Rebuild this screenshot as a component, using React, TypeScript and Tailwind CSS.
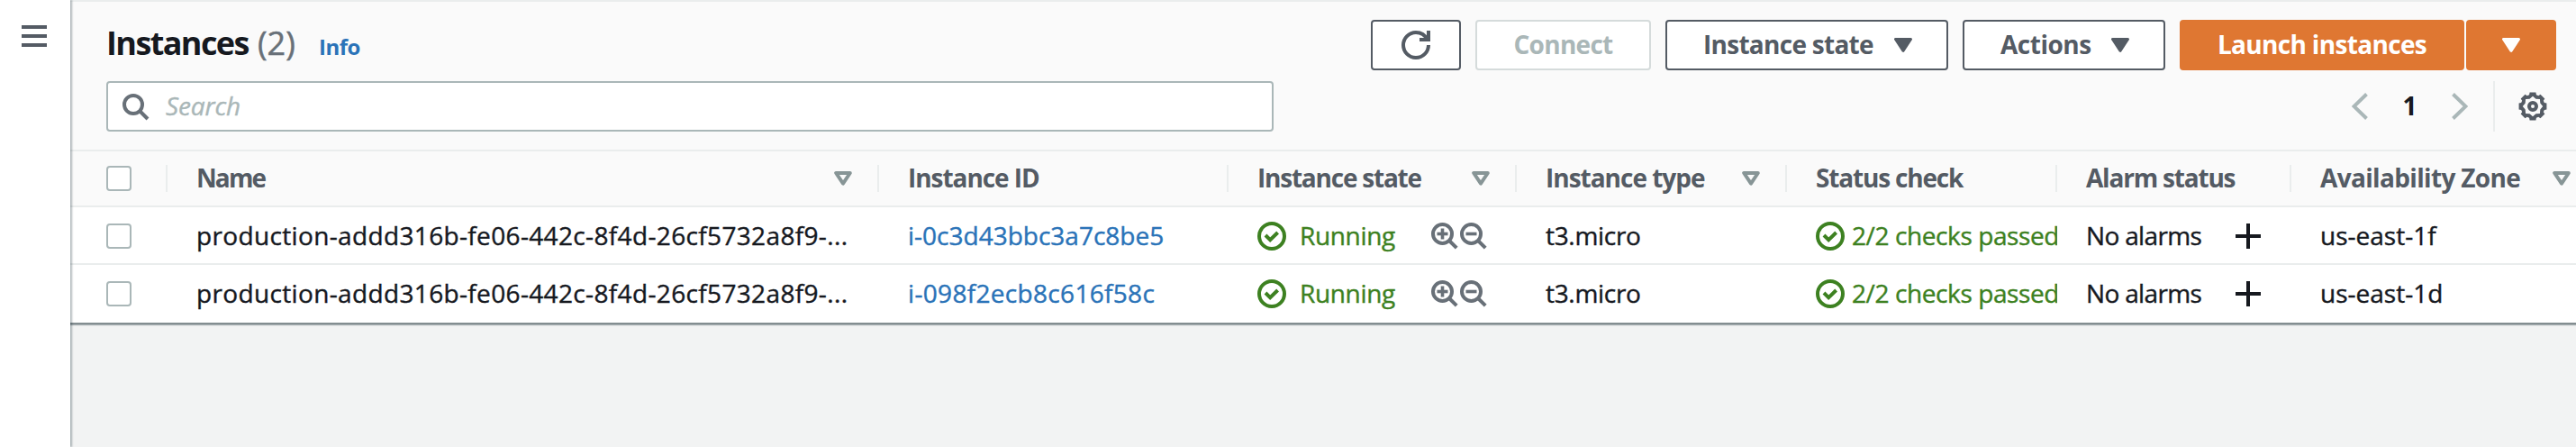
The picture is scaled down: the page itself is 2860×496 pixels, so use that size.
import type { ReactNode } from "react";

const polar = (r: number, deg: number) => {
  const a = (deg * Math.PI) / 180;
  return `${(8 + r * Math.cos(a)).toFixed(2)} ${(8 + r * Math.sin(a)).toFixed(2)}`;
};

const teeth = Array.from({ length: 8 }, (_, i) => i * 45);
const gearOutline = teeth
  .map((t) => [polar(6.7, t - 17), polar(7.9, t - 12.5), polar(7.9, t + 12.5), polar(6.7, t + 17)].join("L"))
  .join("L");
const gearHole = teeth.map((t) => [polar(5.6, t), polar(4.5, t + 22.5)].join("L")).join("L");

function GearIcon() {
  return (
    <svg viewBox="0 0 16 16" className="size-8 text-[#545b64]" fill="currentColor" fillRule="evenodd">
      <path d={`M${gearOutline}ZM${gearHole}Z`} />
      <circle cx="8" cy="8" r="2" fill="none" stroke="currentColor" strokeWidth="2" />
    </svg>
  );
}

function RefreshIcon() {
  return (
    <svg viewBox="0 0 16 16" className="size-8" fill="none" stroke="currentColor" strokeWidth="2">
      <path d="M15 8c0 3.87-3.13 7-7 7s-7-3.13-7-7 3.13-7 7-7c2.79 0 5.2 1.63 6.33 4" />
      <path d="M10 5h5V0" />
    </svg>
  );
}

function CheckCircle() {
  return (
    <svg viewBox="0 0 16 16" className="size-8 shrink-0" fill="none" stroke="currentColor" strokeWidth="2">
      <circle cx="8" cy="8" r="7" />
      <path d="M4.5 7.5 7.1 10.1 11.3 6" />
    </svg>
  );
}

function ZoomIcon({ plus = false }: { plus?: boolean }) {
  return (
    <svg viewBox="0 0 16 16" className="size-8 shrink-0 text-[#687078]" fill="none" stroke="currentColor" strokeWidth="2">
      <circle cx="6.75" cy="6.75" r="5.25" />
      <path d="M10.5 10.5 14.6 14.6" />
      <path d="M3.75 6.75h6" strokeWidth="1.8" />
      {plus && <path d="M6.75 3.75v6" strokeWidth="1.8" />}
    </svg>
  );
}

function SearchIcon() {
  return (
    <svg viewBox="0 0 16 16" className="size-8 shrink-0 text-[#687078]" fill="none" stroke="currentColor" strokeWidth="2">
      <circle cx="7" cy="7" r="5" />
      <path d="m10.5 10.5 4.5 4.5" />
    </svg>
  );
}

function Caret() {
  return (
    <svg viewBox="0 0 20 16" className="h-4 w-5 shrink-0" fill="currentColor" stroke="currentColor" strokeWidth="3" strokeLinejoin="round">
      <path d="M1.5 1.5h17L10 14.3z" />
    </svg>
  );
}

function SortIcon() {
  return (
    <svg viewBox="0 0 20 16" className="h-4 w-5 shrink-0 text-[#879596]" fill="none" stroke="currentColor" strokeWidth="4" strokeLinejoin="round">
      <path d="M2.2 2h15.6L10 13.6z" />
    </svg>
  );
}

function Chevron({ right = false }: { right?: boolean }) {
  return (
    <svg viewBox="0 0 18 30" className="h-[30px] w-[18px] text-[#aab7b8]" fill="none" stroke="currentColor" strokeWidth="4">
      <path d={right ? "M1.5 1.5 15.5 15 1.5 28.5" : "M16.5 1.5 2.5 15 16.5 28.5"} />
    </svg>
  );
}

function PlusIcon() {
  return (
    <svg viewBox="0 0 28 28" className="size-7 shrink-0" fill="none" stroke="currentColor" strokeWidth="4">
      <path d="M14 0v28M0 14h28" />
    </svg>
  );
}

function Checkbox() {
  return <span className="size-7 rounded border-2 border-[#aab7b8] bg-white" />;
}

const columns = [
  { label: "Name", track: "tracking-[-1.9px]", sortable: true },
  { label: "Instance ID", track: "tracking-[-1.05px]", sortable: false },
  { label: "Instance state", track: "tracking-[-1.22px]", sortable: true },
  { label: "Instance type", track: "tracking-[-1.01px]", sortable: true },
  { label: "Status check", track: "tracking-[-1.18px]", sortable: false },
  { label: "Alarm status", track: "tracking-[-1.2px]", sortable: false },
  { label: "Availability Zone", track: "tracking-[-0.66px]", sortable: true },
];

const instances = [
  { id: "i-0c3d43bbc3a7c8be5", idTrack: "tracking-normal", zone: "us-east-1f" },
  { id: "i-098f2ecb8c616f58c", idTrack: "tracking-[0.32px]", zone: "us-east-1d" },
];

const rowGrid = "grid h-16 grid-cols-[108px_790px_388px_320px_300px_300px_260px_316px]";

function Cell({ children, className = "" }: { children: ReactNode; className?: string }) {
  return <div className={`flex h-16 items-center overflow-hidden whitespace-nowrap pl-8 ${className}`}>{children}</div>;
}

function Button({ children, className }: { children: ReactNode; className: string }) {
  return (
    <button className={`flex h-14 items-center whitespace-nowrap rounded border-2 font-bold ${className}`}>
      {children}
    </button>
  );
}

export default function App() {
  return (
    <div className="flex h-[496px] w-[2860px] overflow-hidden bg-[#f2f3f3] font-['Open_Sans','Noto_Sans',sans-serif] text-[28px] leading-[38px] text-[#16191f]">
      <aside className="relative z-10 w-[78px] shrink-0 bg-white pl-6 pt-7 shadow-[2px_0_2px_rgba(0,28,36,0.3)]">
        <div className="flex w-7 flex-col gap-1.5">
          <span className="h-1 bg-[#545b64]" />
          <span className="h-1 bg-[#545b64]" />
          <span className="h-1 bg-[#545b64]" />
        </div>
      </aside>

      <main className="w-[2782px] shrink-0">
        <section className="border-b-2 border-[#838d90] bg-white shadow-[0_1px_1px_rgba(0,28,36,0.3)]">
          <header className="flex h-[166px] flex-col gap-3 border-t-2 border-[#eaeded] bg-[#fafafa] pl-10 pr-[22px] pt-5">
            <div className="flex h-14 justify-between">
              <div className="flex items-baseline pt-px">
                <h1 className="w-[168px] text-[36px] font-bold leading-[50px] tracking-[-1.6px]">Instances</h1>
                <span className="w-[68px] text-[36px] leading-[50px] text-[#687078] [-webkit-text-stroke:0.5px]">(2)</span>
                <a className="text-[24px] font-bold tracking-[-0.5px] text-[#2a73b8]">Info</a>
              </div>
              <div className="flex gap-4">
                <Button className="w-[100px] justify-center border-[#545b64] bg-white text-[#545b64]">
                  <RefreshIcon />
                </Button>
                <Button className="w-[195px] justify-center border-[#d5dbdb] bg-white text-[#aab7b8]">
                  <span className="pb-0.5 tracking-[-0.72px]">Connect</span>
                </Button>
                <Button className="w-[314px] justify-between border-[#545b64] bg-white pl-10 pr-[38px] text-[#545b64]">
                  <span className="pb-0.5 tracking-[-0.72px]">Instance state</span>
                  <Caret />
                </Button>
                <Button className="w-[225px] justify-between border-[#545b64] bg-white pl-10 pr-[38px] text-[#545b64]">
                  <span className="pb-0.5 tracking-[-0.48px]">Actions</span>
                  <Caret />
                </Button>
                <div className="flex gap-0.5">
                  <Button className="w-[316px] justify-center border-[#df7732] bg-[#df7732] text-white">
                    <span className="pb-0.5 tracking-[-0.67px]">Launch instances</span>
                  </Button>
                  <Button className="w-[100px] justify-center border-[#df7732] bg-[#df7732] text-white">
                    <Caret />
                  </Button>
                </div>
              </div>
            </div>

            <div className="flex h-14 items-center justify-between">
              <div className="flex h-14 w-[1296px] items-center rounded border-2 border-[#aab7b8] bg-white pl-3.5">
                <SearchIcon />
                <span className="pb-0.5 pl-[18px] italic tracking-[-0.13px] text-[#aab7b8] [-webkit-text-stroke:0.4px]">Search</span>
              </div>
              <div className="flex items-center">
                <Chevron />
                <span className="w-[93px] pb-0.5 text-center font-bold">1</span>
                <Chevron right />
                <span className="ml-[28px] mr-[26px] h-14 w-0.5 bg-[#eaeded]" />
                <span className="mr-[10px]">
                  <GearIcon />
                </span>
              </div>
            </div>
          </header>

          <div className={`${rowGrid} bg-[#fafafa] font-bold text-[#545b64] shadow-[inset_0_2px_0_#eaeded,inset_0_-2px_0_#eaeded]`}>
            <div className="flex items-center justify-between pl-10">
              <Checkbox />
              <span className="h-[30px] w-0.5 bg-[#eaeded]" />
            </div>
            {columns.map((c, i) => {
              const last = i === columns.length - 1;
              return (
                <Cell key={c.label} className="justify-between">
                  <span className={`pb-0.5 ${c.track}`}>{c.label}</span>
                  <span className="flex items-center">
                    {c.sortable && (
                      <span className={last ? "mr-1.5" : "mr-7"}>
                        <SortIcon />
                      </span>
                    )}
                    {!last && <span className="h-[30px] w-0.5 bg-[#eaeded]" />}
                  </span>
                </Cell>
              );
            })}
          </div>

          {instances.map((row, i) => (
            <div
              key={row.id}
              className={`${rowGrid} [-webkit-text-stroke:0.4px] ${i === 0 ? "shadow-[inset_0_-2px_0_#eaeded]" : ""}`}
            >
              <div className="flex items-center pl-10">
                <Checkbox />
              </div>
              <Cell>
                <span className="pb-0.5 tracking-[0.35px]">production-addd316b-fe06-442c-8f4d-26cf5732a8f9-...</span>
              </Cell>
              <Cell>
                <a className={`pb-0.5 text-[#2a73b8] ${row.idTrack}`}>{row.id}</a>
              </Cell>
              <Cell className="text-[#3d8121]">
                <CheckCircle />
                <span className="ml-[15px] w-[145px] pb-0.5 tracking-[-0.34px]">Running</span>
                <ZoomIcon plus />
                <ZoomIcon />
              </Cell>
              <Cell>
                <span className="pb-0.5 tracking-[-0.31px]">t3.micro</span>
              </Cell>
              <Cell className="text-[#3d8121]">
                <CheckCircle />
                <span className="ml-2 pb-0.5 tracking-[-0.4px]">2/2 checks passed</span>
              </Cell>
              <Cell>
                <span className="w-[166px] pb-0.5 tracking-[-0.66px]">No alarms</span>
                <PlusIcon />
              </Cell>
              <Cell>
                <span className="pb-0.5">{row.zone}</span>
              </Cell>
            </div>
          ))}
        </section>
      </main>
    </div>
  );
}
